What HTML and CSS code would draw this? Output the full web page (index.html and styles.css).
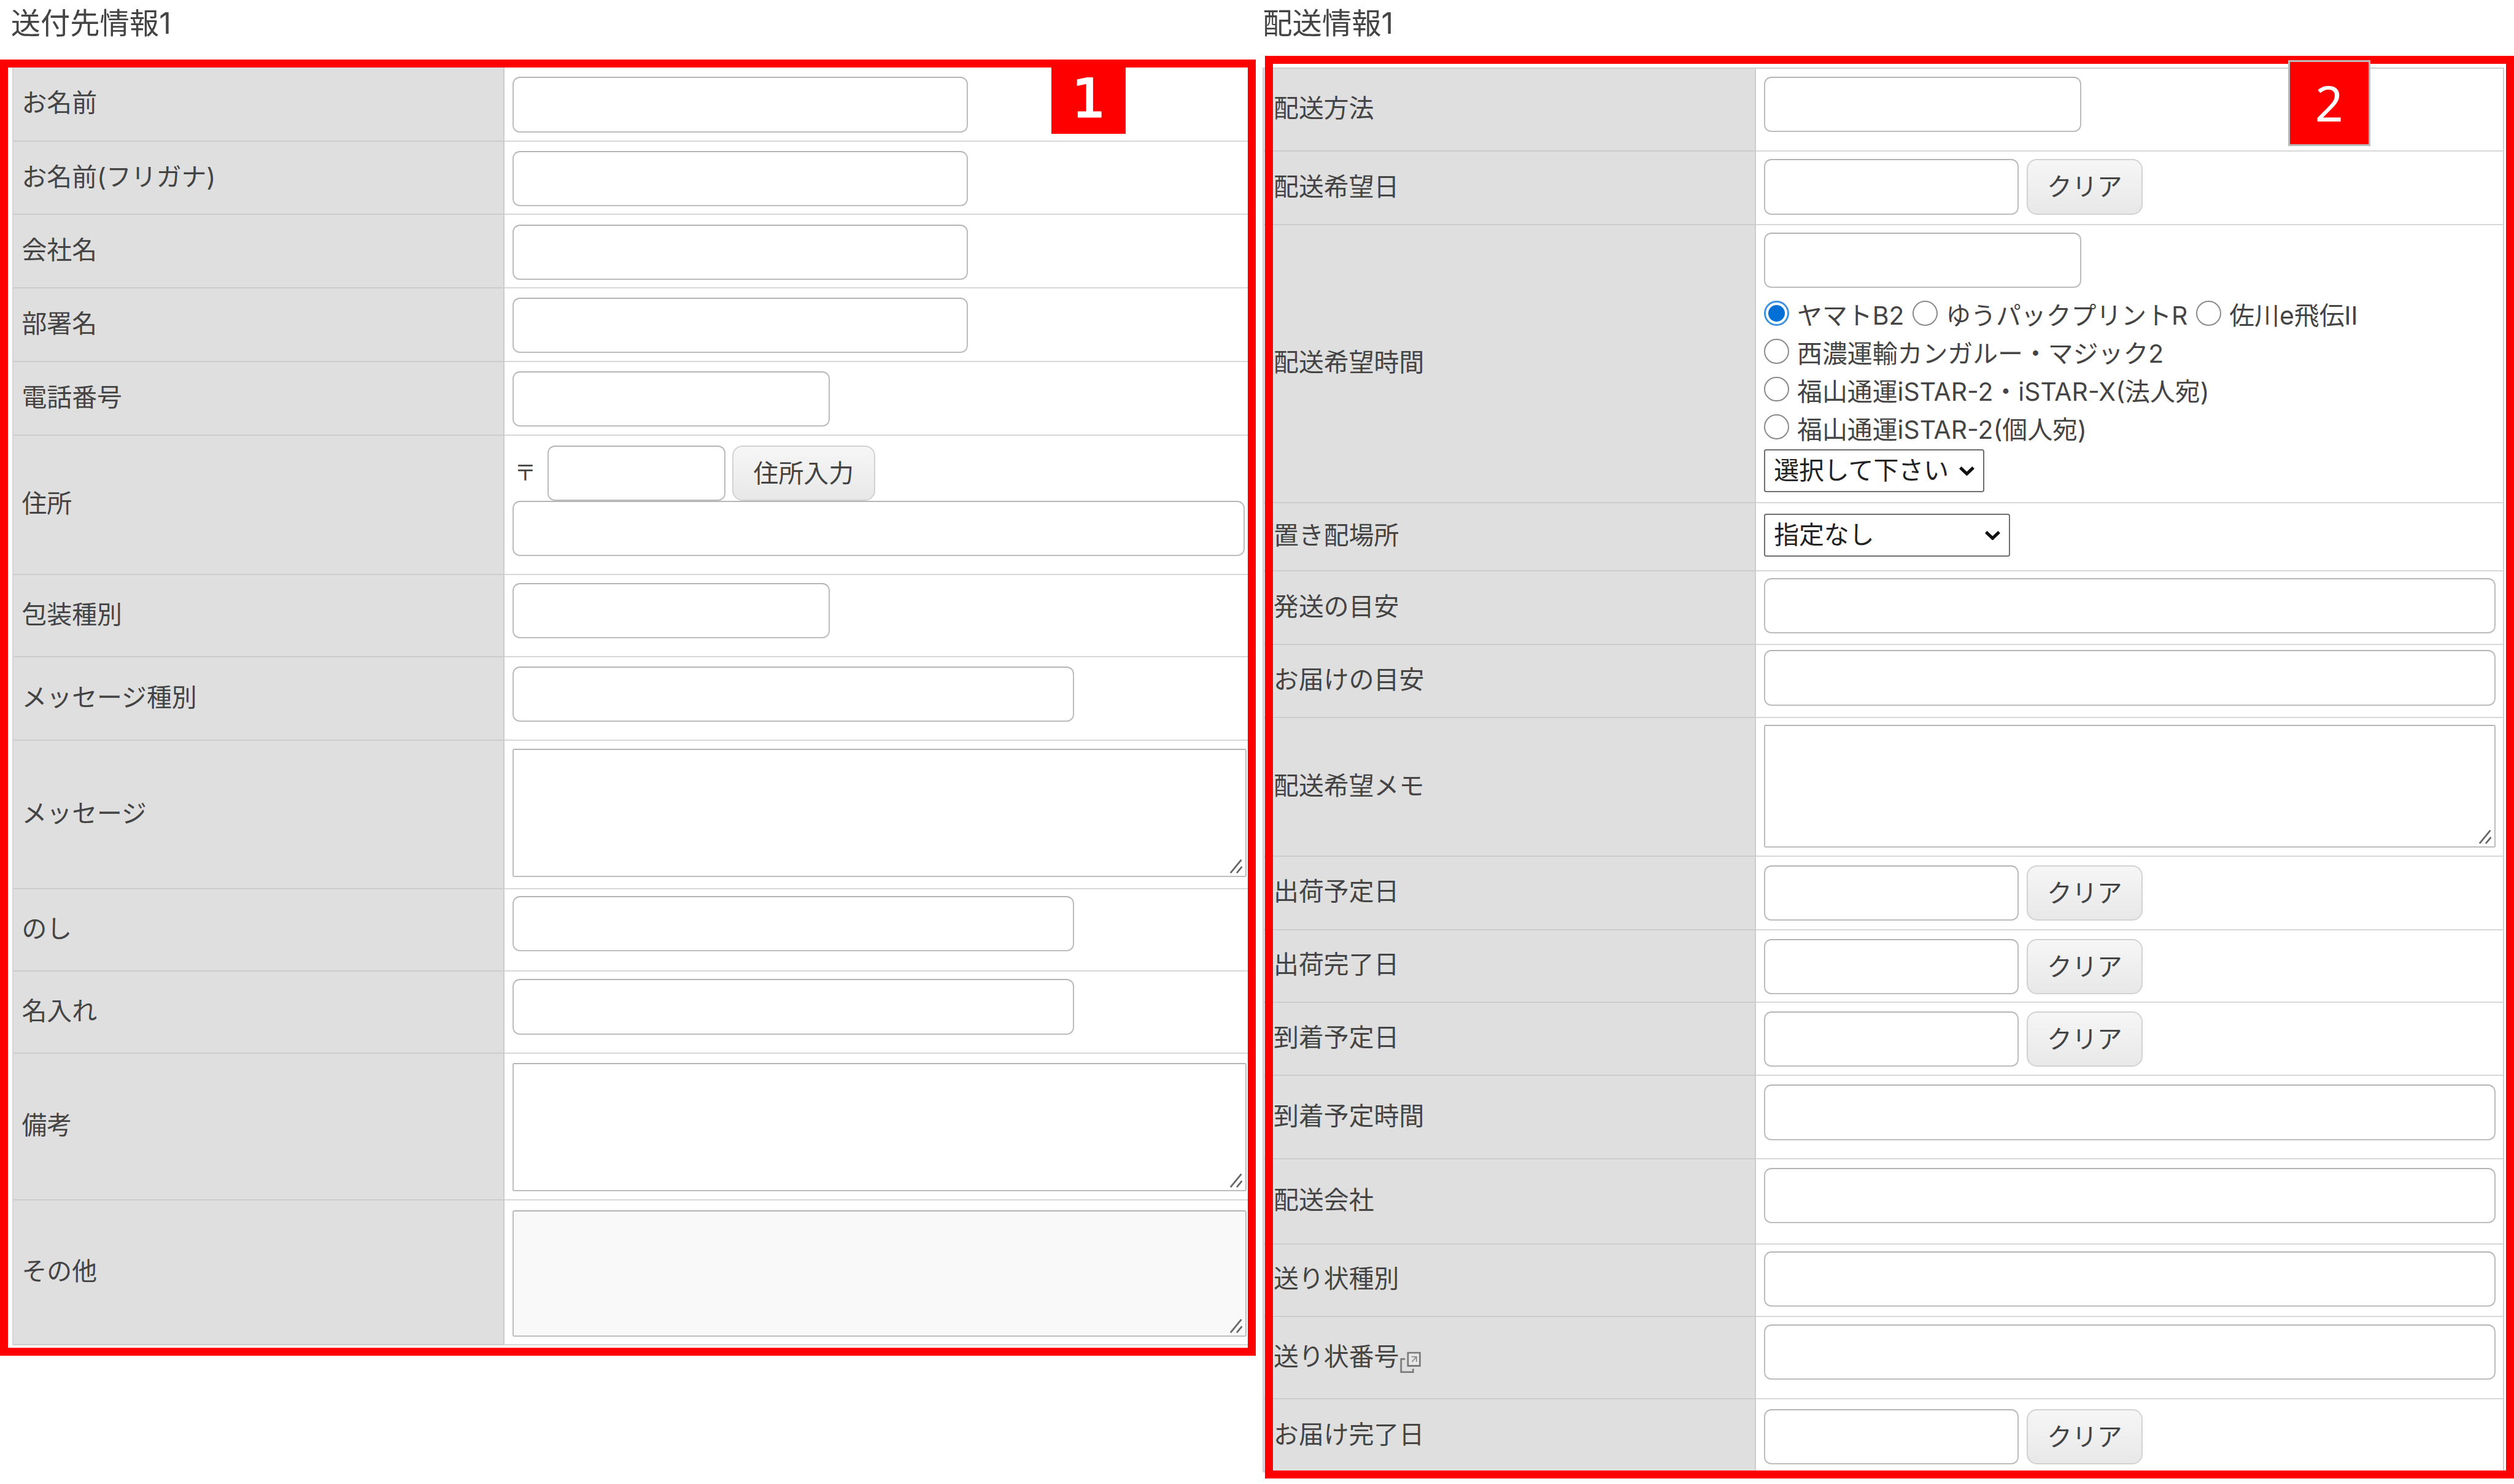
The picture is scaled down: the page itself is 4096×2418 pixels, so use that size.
FILE: index.html
```html
<!DOCTYPE html>
<html lang="ja">
<head>
<meta charset="utf-8">
<title>送付先情報・配送情報</title>
<link rel="stylesheet" href="styles.css">
</head>
<body>
<svg class="defs" width="0" height="0" aria-hidden="true"><defs>
<g id="grip"><path d="M2 24 L21 1 M13 24 L22 13" fill="none" stroke="#666" stroke-width="3"/></g>
<path id="chev" d="M3 3 L14.5 14 L26 3" fill="none" stroke="#111" stroke-width="5.5"/>
</defs></svg>
<main class="page">
  <section class="col col-left">
    <h2 class="title">送付先情報1</h2>
    <div class="form form-left">
      <div class="th">お名前</div><div class="td p17"><input class="in w799"></div>
      <div class="th">お名前(フリガナ)</div><div class="td p16"><input class="in w799"></div>
      <div class="th">会社名</div><div class="td p17"><input class="in w799"></div>
      <div class="th">部署名</div><div class="td p16"><input class="in w799"></div>
      <div class="th">電話番号</div><div class="td p16"><input class="in w557"></div>
      <div class="th">住所</div>
      <div class="td p17">
        <div class="zip"><span class="postal">〒</span><input class="in w312"><button class="btn w250">住所入力</button></div>
        <input class="in w1284">
      </div>
      <div class="th">包装種別</div><div class="td p14"><input class="in w557"></div>
      <div class="th">メッセージ種別</div><div class="td p16"><input class="in w985"></div>
      <div class="th">メッセージ</div>
      <div class="td p14"><div class="ta-wrap"><textarea class="ta w1288 h225"></textarea><svg class="grip" viewBox="0 0 24 25"><use href="#grip"/></svg></div></div>
      <div class="th">のし</div><div class="td p12"><input class="in w985"></div>
      <div class="th">名入れ</div><div class="td p13"><input class="in w985"></div>
      <div class="th">備考</div>
      <div class="td p16"><div class="ta-wrap"><textarea class="ta w1288 h225"></textarea><svg class="grip" viewBox="0 0 24 25"><use href="#grip"/></svg></div></div>
      <div class="th">その他</div>
      <div class="td p17"><div class="ta-wrap"><textarea class="ta w1288 h222 ro"></textarea><svg class="grip" viewBox="0 0 24 25"><use href="#grip"/></svg></div></div>
    </div>
    <div class="frame frame-left"></div>
    <div class="badge badge-1">1</div>
  </section>

  <section class="col col-right">
    <h2 class="title">配送情報1</h2>
    <div class="form form-right">
      <div class="th">配送方法</div><div class="td p14"><input class="in w556"></div>
      <div class="th">配送希望日</div><div class="td p13"><div class="date"><input class="in w446"><button class="btn w204">クリア</button></div></div>
      <div class="th">配送希望時間</div>
      <div class="td p13">
        <input class="in w556">
        <div class="radios">
          <div class="rline"><label class="rl"><input type="radio" name="d" class="rd" checked><span>ヤマトB2</span></label><label class="rl"><input type="radio" name="d" class="rd"><span>ゆうパックプリントR</span></label><label class="rl"><input type="radio" name="d" class="rd"><span>佐川e飛伝II</span></label></div>
          <div class="rline"><label class="rl"><input type="radio" name="d" class="rd"><span>西濃運輸カンガルー・マジック2</span></label></div>
          <div class="rline"><label class="rl"><input type="radio" name="d" class="rd"><span>福山通運iSTAR-2・iSTAR-X(法人宛)</span></label></div>
          <div class="rline"><label class="rl"><input type="radio" name="d" class="rd"><span>福山通運iSTAR-2(個人宛)</span></label></div>
        </div>
        <div class="sel-wrap w386"><select class="sel"><option>選択して下さい</option></select><svg class="chev" viewBox="0 0 29 17"><use href="#chev"/></svg></div>
      </div>
      <div class="th">置き配場所</div><div class="td p19"><div class="sel-wrap w431"><select class="sel"><option>指定なし</option></select><svg class="chev" viewBox="0 0 29 17"><use href="#chev"/></svg></div></div>
      <div class="th">発送の目安</div><div class="td p12"><input class="in w1283"></div>
      <div class="th">お届けの目安</div><div class="td p9"><input class="in w1283"></div>
      <div class="th">配送希望メモ</div>
      <div class="td p12"><div class="ta-wrap"><textarea class="ta w1283 h215"></textarea><svg class="grip" viewBox="0 0 24 25"><use href="#grip"/></svg></div></div>
      <div class="th">出荷予定日</div><div class="td p15"><div class="date"><input class="in w446"><button class="btn w204">クリア</button></div></div>
      <div class="th">出荷完了日</div><div class="td p15"><div class="date"><input class="in w446"><button class="btn w204">クリア</button></div></div>
      <div class="th">到着予定日</div><div class="td p15"><div class="date"><input class="in w446"><button class="btn w204">クリア</button></div></div>
      <div class="th">到着予定時間</div><div class="td p15"><input class="in w1283"></div>
      <div class="th">配送会社</div><div class="td p15"><input class="in w1283"></div>
      <div class="th">送り状種別</div><div class="td p12"><input class="in w1283"></div>
      <div class="th">送り状番号<svg class="ext" viewBox="0 0 38 38" aria-hidden="true"><path d="M15 2h21v23H15z" fill="#e8e8e8" stroke="#7c7c7c" stroke-width="3"/><path d="M21 9h9v9M29 10l-7 8" fill="none" stroke="#8c8c8c" stroke-width="2"/><path d="M10 13H3v23h21v-6" fill="none" stroke="#7c7c7c" stroke-width="3"/></svg></div><div class="td p13"><input class="in w1283"></div>
      <div class="th">お届け完了日</div><div class="td p17"><div class="date"><input class="in w446"><button class="btn w204">クリア</button></div></div>
    </div>
    <div class="frame frame-right"></div>
    <div class="badge badge-2">2</div>
  </section>
</main>
</body>
</html>
```

FILE: styles.css
```css
html, body { margin: 0; padding: 0; background: #fff; overflow: hidden; }
.defs { position: absolute; }
.page {
  zoom: 0.92922;
  width: 4408px;
  height: 2602px;
  display: flex;
  font-family: Inter, "Noto Sans CJK JP", "Liberation Sans", sans-serif;
  font-size: 44px;
  line-height: 60px;
  color: #444;
}
.col { position: relative; box-sizing: border-box; }
.col-left { width: 2214px; padding-left: 21px; }
.col-right { width: 2194px; }

.title {
  margin: 0;
  height: 118px;
  box-sizing: border-box;
  font-size: 52px;
  font-weight: 400;
  line-height: 82px;
  color: #444;
}
.col-left .title { margin-left: -2px; }

.form { display: grid; box-sizing: border-box; }
.form-left {
  width: 2179px;
  border-left: 3px solid #d4d4d4;
  grid-template-columns: 861px 1fr;
  grid-template-rows: 131px 128px 129px 129px 129px 244px 145px 146px 260px 145px 144px 257px 254px;
}
.form-right {
  width: 2177px;
  border: 3px solid #cfcfcf;
  border-bottom: 0;
  grid-template-columns: 863px 1fr;
  grid-template-rows: 146px 129px 487px 120px 129px 128px 243px 129px 127px 129px 146px 149px 127px 145px 128px;
}
.th {
  display: flex;
  align-items: center;
  box-sizing: border-box;
  padding: 0 0 3px 15px;
  background: #dfdfdf;
  border-right: 3px solid #ccc;
  border-bottom: 3px solid #ccc;
  white-space: nowrap;
}
.form-right .th { padding-left: 17px; }
.td {
  box-sizing: border-box;
  padding-left: 14px;
  border-bottom: 3px solid #d8d8d8;
}
.p9 { padding-top: 9px; }
.p12 { padding-top: 12px; }
.p13 { padding-top: 13px; }
.p14 { padding-top: 14px; }
.p15 { padding-top: 15px; }
.p16 { padding-top: 16px; }
.p17 { padding-top: 17px; }
.p19 { padding-top: 19px; }

.in, .ta {
  display: block;
  box-sizing: border-box;
  margin: 0;
  padding: 0;
  background: #fff;
  border: 3px solid #bdbdbd;
  border-top-color: #b4b4b4;
  outline: 0;
  font: inherit;
}
.in { height: 97px; border-radius: 13px; }
.ta { resize: none; border-radius: 3px; }
.ro { background: #f9f9f9; }
.w312 { width: 312px; }
.w446 { width: 446px; }
.w556 { width: 556px; }
.w557 { width: 557px; }
.w799 { width: 799px; }
.w985 { width: 985px; }
.w1283 { width: 1283px; }
.w1284 { width: 1284px; }
.w1288 { width: 1288px; }
.h215 { height: 215px; }
.h222 { height: 222px; }
.h225 { height: 225px; }

.ta-wrap { position: relative; width: max-content; }
.grip { position: absolute; right: 7px; bottom: 6px; width: 24px; height: 25px; }

.zip, .date { display: flex; align-items: center; }
.postal { width: 62px; font-size: 38px; line-height: 97px; padding-left: 4px; box-sizing: border-box; }

.btn {
  box-sizing: border-box;
  height: 97px;
  margin: 0 0 0 14px;
  padding: 2px 0 0;
  border: 3px solid #d2d2d2;
  border-radius: 18px;
  background: linear-gradient(#f6f6f6, #e8e8e8);
  font: inherit;
  color: #444;
  flex: none;
}
.w204 { width: 204px; }
.w250 { width: 250px; margin-left: 12px; }

.radios { margin-top: 16px; }
.rline { display: flex; height: 66.5px; align-items: center; white-space: nowrap; }
.rl { display: flex; align-items: center; margin-right: 15px; }
.rd {
  appearance: none;
  flex: none;
  box-sizing: border-box;
  width: 44px;
  height: 44px;
  margin: -10px 14px 0 0;
  background: #fff;
  border: 3px solid #8a8a8a;
  border-radius: 50%;
}
.rd:checked {
  border: 4px solid #3f92e0;
  background: radial-gradient(circle, #0070d6 0 14px, #fff 15px);
}

.sel-wrap { position: relative; height: 75px; }
.w386 { width: 386px; margin-top: 1px; }
.w431 { width: 431px; }
.sel {
  appearance: none;
  display: block;
  box-sizing: border-box;
  width: 100%;
  height: 100%;
  margin: 0;
  background: #fff;
  border: 3px solid #6e6e6e;
  border-radius: 4px;
  font: inherit;
  line-height: normal;
  color: #222;
  padding: 0 0 2px 15px;
}
.chev { position: absolute; right: 16px; top: 29px; width: 29px; height: 17px; pointer-events: none; }

.frame {
  position: absolute;
  box-sizing: border-box;
  border: 14px solid #f00;
  pointer-events: none;
}
.frame-left { left: 0; top: 104px; width: 2202px; height: 2273px; }
.frame-right { left: 4px; top: 98px; width: 2190px; height: 2495px; }

.badge {
  position: absolute;
  display: flex;
  align-items: center;
  justify-content: center;
  box-sizing: border-box;
  background: #f00;
  color: #fff;
  line-height: 1;
}
.badge-1 {
  left: 1844px;
  top: 112px;
  width: 130px;
  height: 123px;
  font-family: "DejaVu Sans", sans-serif;
  font-size: 92px;
  -webkit-text-stroke: 3px #fff;
}
.badge-2 {
  left: 1798px;
  top: 105px;
  width: 144px;
  height: 151px;
  border: 4px solid #bbb;
  font-family: "Noto Sans", sans-serif;
  font-size: 86px;
}

.ext { width: 38px; height: 38px; margin-left: 1px; transform: translateY(10px); flex: none; }
```
